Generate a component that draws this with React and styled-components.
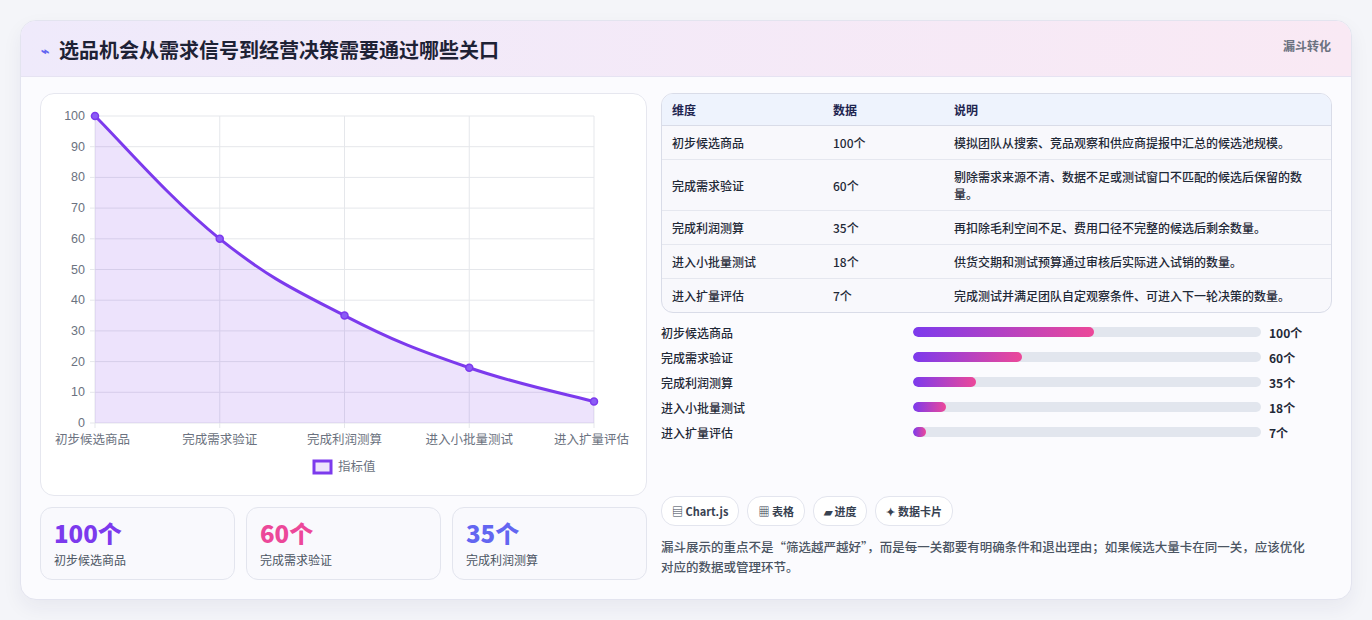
import React from "react";
import styled, { createGlobalStyle } from "styled-components";

const Global = createGlobalStyle`
  body { margin: 0; background: #f4f5f9; font-family: "Noto Sans CJK SC", "Noto Sans", sans-serif; }
`;

const funnel = [
  { name: "初步候选商品", v: 100, note: "模拟团队从搜索、竞品观察和供应商提报中汇总的候选池规模。" },
  { name: "完成需求验证", v: 60, note: "剔除需求来源不清、数据不足或测试窗口不匹配的候选后保留的数量。" },
  { name: "完成利润测算", v: 35, note: "再扣除毛利空间不足、费用口径不完整的候选后剩余数量。" },
  { name: "进入小批量测试", v: 18, note: "供货交期和测试预算通过审核后实际进入试销的数量。" },
  { name: "进入扩量评估", v: 7, note: "完成测试并满足团队自定观察条件、可进入下一轮决策的数量。" },
];

export default function App() {
  return (
    <>
      <Global />
      <Page>
        <Card>
          <Header>
            <Title><Bolt>⌁</Bolt>选品机会从需求信号到经营决策需要通过哪些关口</Title>
            <Tag>漏斗转化</Tag>
          </Header>
          <Body>
            <Left>
              <ChartBox><Chart /></ChartBox>
              <Stats>
                <Stat><Big $c="#7c3aed">100个</Big><Small>初步候选商品</Small></Stat>
                <Stat><Big $c="#ec4899">60个</Big><Small>完成需求验证</Small></Stat>
                <Stat><Big $c="#6366f1">35个</Big><Small>完成利润测算</Small></Stat>
              </Stats>
            </Left>
            <Right>
              <Table>
                <thead>
                  <tr><Th>维度</Th><Th>数据</Th><Th>说明</Th></tr>
                </thead>
                <tbody>
                  {funnel.map((r) => (
                    <tr key={r.name}><Td>{r.name}</Td><Td>{r.v}个</Td><Td>{r.note}</Td></tr>
                  ))}
                </tbody>
              </Table>
              <Bars>
                {funnel.map((r) => (
                  <BarRow key={r.name}>
                    <BarLabel>{r.name}</BarLabel>
                    <Track><Fill style={{ width: `${r.v * 0.52}%` }} /></Track>
                    <BarVal>{r.v}个</BarVal>
                  </BarRow>
                ))}
              </Bars>
              <Pills>
                <Pill>▤ Chart.js</Pill>
                <Pill>▦ 表格</Pill>
                <Pill>▰ 进度</Pill>
                <Pill>✦ 数据卡片</Pill>
              </Pills>
              <Note>漏斗展示的重点不是“筛选越严越好”，而是每一关都要有明确条件和退出理由；如果候选大量卡在同一关，应该优化对应的数据或管理环节。</Note>
            </Right>
          </Body>
        </Card>
      </Page>
    </>
  );
}

function Chart() {
  const x0 = 54, x1 = 553, yT = 22, yB = 329;
  const xs = funnel.map((_, i) => x0 + ((x1 - x0) * i) / 4);
  const y = (v) => yB - ((yB - yT) * v) / 100;
  const pts = funnel.map((r, i) => [xs[i], y(r.v)]);
  let d = `M${pts[0][0]},${pts[0][1]}`;
  for (let i = 1; i < pts.length; i++) {
    const p0 = pts[Math.max(i - 2, 0)], p1 = pts[i - 1], p2 = pts[i], p3 = pts[Math.min(i + 1, pts.length - 1)];
    const t = 0.2;
    d += ` C${p1[0] + (p2[0] - p0[0]) * t},${p1[1] + (p2[1] - p0[1]) * t} ${p2[0] - (p3[0] - p1[0]) * t},${p2[1] - (p3[1] - p1[1]) * t} ${p2[0]},${p2[1]}`;
  }
  const font = { fontFamily: "Liberation Sans, Noto Sans CJK SC, sans-serif", fontSize: 12.5, fill: "#6b7280" };
  return (
    <svg width="605" height="401" viewBox="0 0 605 401">
      {Array.from({ length: 11 }, (_, i) => {
        const yy = y(i * 10);
        return (
          <g key={i}>
            <line x1={x0 - 5} x2={x1} y1={yy} y2={yy} stroke="#e5e7eb" />
            <text x={x0 - 10} y={yy + 4} textAnchor="end" style={font}>{i * 10}</text>
          </g>
        );
      })}
      {xs.map((xx, i) => (
        <g key={i}>
          <line x1={xx} x2={xx} y1={yT} y2={yB + 5} stroke="#e5e7eb" />
          <text x={i === 0 ? xx - 40 : i === 4 ? xx - 40 : xx} y={350} textAnchor={i === 0 || i === 4 ? "start" : "middle"} style={font}>{funnel[i].name}</text>
        </g>
      ))}
      <path d={`${d} L${x1},${yB} L${x0},${yB} Z`} fill="rgba(124,58,237,0.14)" />
      <path d={d} fill="none" stroke="#7c3aed" strokeWidth="3" />
      {pts.map(([a, b], i) => <circle key={i} cx={a} cy={b} r="3.5" fill="#8b5cf6" stroke="#7c3aed" strokeWidth="1.5" />)}
      <rect x="273" y="367" width="17" height="12" fill="rgba(124,58,237,0.14)" stroke="#7c3aed" strokeWidth="3" />
      <text x="297" y="377" style={font}>指标值</text>
    </svg>
  );
}

const Page = styled.div`padding: 20px;`;
const Card = styled.div`
  width: 1332px; height: 580px; box-sizing: border-box;
  background: #fbfbfe; border: 1px solid #e3e4ef; border-radius: 16px;
  box-shadow: 0 8px 20px rgba(30,30,80,0.06); overflow: hidden;
`;
const Header = styled.div`
  height: 55px; display: flex; justify-content: space-between; align-items: flex-start;
  padding: 0 20px; background: linear-gradient(90deg, #efeafb, #f9e9f4);
  border-bottom: 1px solid #e6e3f2;
`;
const Title = styled.h1`
  margin: 14px 0 0; font-size: 20px; font-weight: 700; color: #1e2235; display: flex; align-items: center;
`;
const Bolt = styled.span`color: #6366f1; font-size: 14px; margin-right: 10px;`;
const Tag = styled.span`margin-top: 16px; font-size: 12px; font-weight: 700; color: #6b7280;`;
const Body = styled.div`display: flex; gap: 14px; padding: 16px 19px 0;`;
const Left = styled.div`width: 607px; display: flex; flex-direction: column; gap: 11px;`;
const ChartBox = styled.div`
  height: 403px; box-sizing: border-box; background: #fff; border: 1px solid #e6e7ef; border-radius: 14px;
`;
const Stats = styled.div`display: grid; grid-template-columns: repeat(3, 1fr); gap: 11px;`;
const Stat = styled.div`
  height: 73px; box-sizing: border-box; padding: 11px 13px; background: #f9f9fd;
  border: 1px solid #e3e5ee; border-radius: 12px;
`;
const Big = styled.div`font-size: 24px; font-weight: 800; color: ${(p) => p.$c}; line-height: 28px;`;
const Small = styled.div`font-size: 12px; color: #4b5563; margin-top: 4px;`;
const Right = styled.div`width: 672px; display: flex; flex-direction: column;`;
const Table = styled.table`
  width: 100%; border-collapse: separate; border-spacing: 0; font-size: 12px;
  border: 1px solid #d9dce8; border-radius: 12px; overflow: hidden; background: #f8f8fc;
  tbody tr:first-child td { border-top: 1px solid #d9dce8; }
`;
const Th = styled.th`
  text-align: left; font-weight: 700; color: #1e2550; background: #eef3fd; height: 31px; padding: 0 10px;
  &:first-child { width: 141px; } &:nth-child(2) { width: 101px; }
`;
const Td = styled.td`
  padding: 8px 10px; line-height: 17px; color: #1f2937; font-weight: 500; height: 17px;
  tr + tr & { border-top: 1px solid #e5e7ef; }
`;
const Bars = styled.div`display: flex; flex-direction: column; gap: 7px; margin-top: 10px;`;
const BarRow = styled.div`display: flex; align-items: center; height: 18px; font-size: 12px; font-weight: 500; color: #1f2937;`;
const BarLabel = styled.span`width: 252px;`;
const Track = styled.div`width: 348px; height: 10px; border-radius: 5px; background: #e2e6ee; overflow: hidden;`;
const Fill = styled.div`height: 100%; border-radius: 5px; background: linear-gradient(90deg, #7c3aed, #ec4899);`;
const BarVal = styled.span`margin-left: 8px; font-weight: 700;`;
const Pills = styled.div`display: flex; gap: 8px; margin-top: 55px;`;
const Pill = styled.span`
  height: 28px; padding: 0 10px; display: flex; align-items: center; border-radius: 14px;
  border: 1px solid #e3e5ee; background: #fff; font-size: 11px; font-weight: 700; color: #374151;
`;
const Note = styled.p`margin: 11px 0 0; padding-right: 24px; font-size: 12.5px; line-height: 20px; color: #4b5563; font-weight: 500;`;
